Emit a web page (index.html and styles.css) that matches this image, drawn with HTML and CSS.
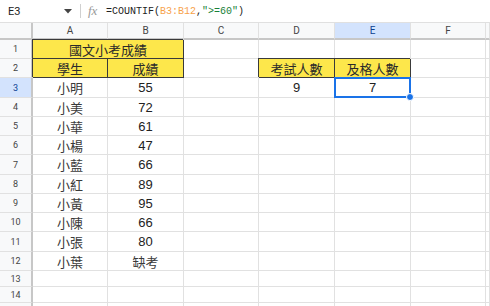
FILE: index.html
```html
<!DOCTYPE html>
<html lang="zh-Hant">
<head>
<meta charset="utf-8">
<title>Sheet</title>
<link rel="stylesheet" href="styles.css">
</head>
<body>
<div class="fbar">
  <div class="namebox">E3</div>
  <svg class="caret" width="8" height="5" viewBox="0 0 8 5"><path d="M0 0 L8 0 L4 4.5 Z" fill="#444"/></svg>
  <div class="sep"></div>
  <div class="fx">fx</div>
  <div class="formula">=COUNTIF(<span class="ref">B3:B12</span>,<span class="str">"&gt;=60"</span>)</div>
</div>
<div class="sheet">
  <div class="corner"></div>
  <div class="ch">A</div><div class="ch">B</div><div class="ch">C</div><div class="ch">D</div><div class="ch sel">E</div><div class="ch">F</div><div class="ch"></div>

  <div class="rh">1</div><div class="c y span2">國文小考成績</div><div class="c"></div><div class="c"></div><div class="c"></div><div class="c"></div><div class="c"></div>
  <div class="rh">2</div><div class="c y">學生</div><div class="c y">成績</div><div class="c"></div><div class="c y">考試人數</div><div class="c y">及格人數</div><div class="c"></div><div class="c"></div>
  <div class="rh sel">3</div><div class="c">小明</div><div class="c n">55</div><div class="c"></div><div class="c n">9</div><div class="c n active">7</div><div class="c"></div><div class="c"></div>
  <div class="rh">4</div><div class="c">小美</div><div class="c n">72</div><div class="c"></div><div class="c"></div><div class="c"></div><div class="c"></div><div class="c"></div>
  <div class="rh">5</div><div class="c">小華</div><div class="c n">61</div><div class="c"></div><div class="c"></div><div class="c"></div><div class="c"></div><div class="c"></div>
  <div class="rh">6</div><div class="c">小楊</div><div class="c n">47</div><div class="c"></div><div class="c"></div><div class="c"></div><div class="c"></div><div class="c"></div>
  <div class="rh">7</div><div class="c">小藍</div><div class="c n">66</div><div class="c"></div><div class="c"></div><div class="c"></div><div class="c"></div><div class="c"></div>
  <div class="rh">8</div><div class="c">小紅</div><div class="c n">89</div><div class="c"></div><div class="c"></div><div class="c"></div><div class="c"></div><div class="c"></div>
  <div class="rh">9</div><div class="c">小黃</div><div class="c n">95</div><div class="c"></div><div class="c"></div><div class="c"></div><div class="c"></div><div class="c"></div>
  <div class="rh">10</div><div class="c">小陳</div><div class="c n">66</div><div class="c"></div><div class="c"></div><div class="c"></div><div class="c"></div><div class="c"></div>
  <div class="rh">11</div><div class="c">小張</div><div class="c n">80</div><div class="c"></div><div class="c"></div><div class="c"></div><div class="c"></div><div class="c"></div>
  <div class="rh">12</div><div class="c">小葉</div><div class="c">缺考</div><div class="c"></div><div class="c"></div><div class="c"></div><div class="c"></div><div class="c"></div>
  <div class="rh">13</div><div class="c"></div><div class="c"></div><div class="c"></div><div class="c"></div><div class="c"></div><div class="c"></div><div class="c"></div>
  <div class="rh">14</div><div class="c"></div><div class="c"></div><div class="c"></div><div class="c"></div><div class="c"></div><div class="c"></div><div class="c"></div>
  <div class="rh"></div><div class="c"></div><div class="c"></div><div class="c"></div><div class="c"></div><div class="c"></div><div class="c"></div><div class="c"></div>
</div>
</body>
</html>
```
FILE: styles.css
```css
html, body {
  margin: 0;
  padding: 0;
  background: #fff;
  overflow: hidden;
}
body {
  width: 490px;
  height: 306px;
  font-family: "Liberation Sans", "Noto Sans CJK TC", sans-serif;
  color: #222;
}
.fbar {
  height: 22px;
  border-bottom: 1px solid #e0e0e0;
  display: flex;
  align-items: center;
  box-sizing: content-box;
}
.namebox {
  font-family: Roboto, "Liberation Sans", sans-serif;
  font-size: 11px;
  color: #222;
  width: 56px;
  padding-left: 8px;
}
.sep {
  width: 1px;
  height: 14px;
  background: #d0d0d0;
  margin-left: 8px;
  margin-right: 7px;
}
.fx {
  font-family: "Liberation Serif", serif;
  font-style: italic;
  font-size: 13px;
  color: #9a9a9a;
  width: 18px;
}
.formula {
  font-family: "Liberation Mono", "DejaVu Sans Mono", monospace;
  font-size: 10px;
  color: #222;
}
.ref { color: #f7a24a; }
.str { color: #188038; }

.sheet {
  display: grid;
  grid-template-columns: 33px 75px 76px 75px 76px 76px 75px 1fr;
  grid-template-rows: 17px 19px 19px 20px 19px 19px 19px 20px 19px 19px 19px 20px 19px 16px 16px 16px;
}
.sheet > div {
  box-sizing: border-box;
  display: flex;
  align-items: center;
  justify-content: center;
  min-width: 0;
  white-space: nowrap;
}
.corner {
  background: #f8f9fa;
  border-right: 2px solid #c7c7c7;
  border-bottom: 2px solid #c7c7c7;
}
.ch {
  background: #f8f9fa;
  border-right: 1px solid #e1e1e1;
  border-bottom: 2px solid #c7c7c7;
  font-family: Roboto, "Liberation Sans", sans-serif;
  font-size: 10px;
  color: #444;
}
.ch.sel, .rh.sel {
  background: #d3e3fd;
  color: #0b3f91;
}
.rh {
  background: #f8f9fa;
  border-right: 2px solid #c7c7c7;
  border-bottom: 1px solid #e1e1e1;
  font-family: Roboto, "Liberation Sans", sans-serif;
  font-size: 9px;
  color: #444;
}
.c {
  border-right: 1px solid #e1e1e1;
  border-bottom: 1px solid #e1e1e1;
  font-size: 13px;
  color: #3a3a3a;
}
.n {
  font-family: "Liberation Sans", sans-serif;
  font-size: 13px;
  color: #222;
}
.y {
  background: #fde74b;
  border-right: 1px solid #3a3a3a;
  border-bottom: 1px solid #3a3a3a;
  box-shadow: -1px -1px 0 0 #3a3a3a;
  color: #2a2a2a;
}
.span2 {
  grid-column: span 2;
}
.active {
  position: relative;
}
.active::before {
  content: "";
  position: absolute;
  left: -1px;
  top: -1px;
  right: -1px;
  bottom: -1px;
  border: 2px solid #1a73e8;
}
.active::after {
  content: "";
  position: absolute;
  right: -4px;
  bottom: -4px;
  width: 6px;
  height: 6px;
  border-radius: 50%;
  background: #1a73e8;
  border: 1px solid #fff;
}
```
